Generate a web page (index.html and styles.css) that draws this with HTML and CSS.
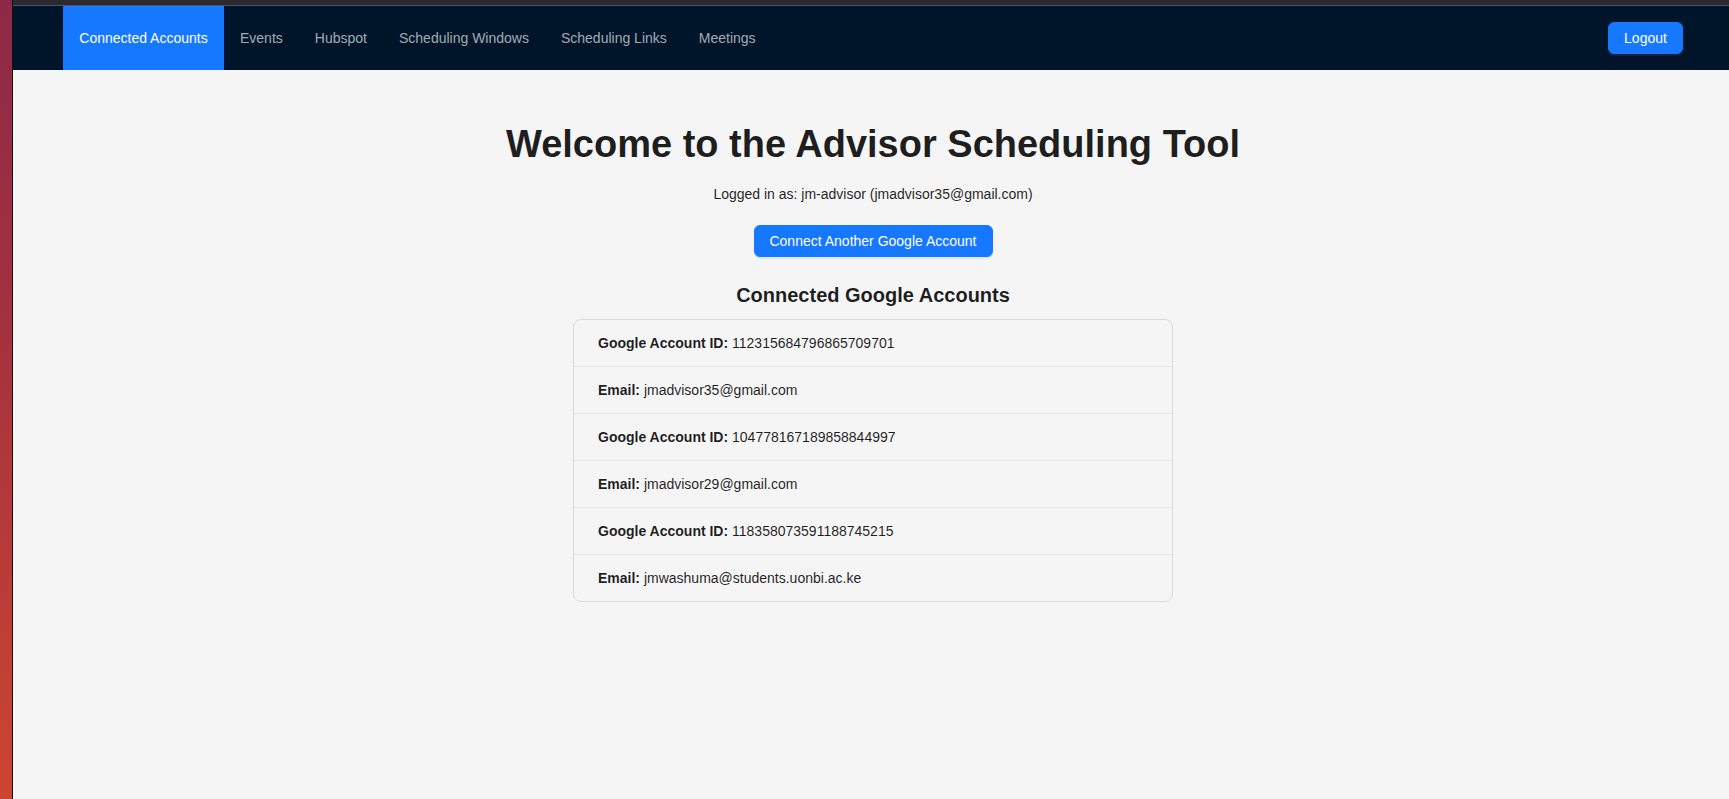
FILE: index.html
```html
<!DOCTYPE html>
<html lang="en">
<head>
<meta charset="utf-8">
<title>Advisor Scheduling Tool</title>
<link rel="stylesheet" href="styles.css">
</head>
<body>
<div class="frame">
  <div class="strip"></div>
  <div class="edge"></div>
  <div class="window">
    <div class="titlebar"></div>
    <header class="header">
      <nav class="menu">
        <a class="menu-item active">Connected Accounts</a>
        <a class="menu-item">Events</a>
        <a class="menu-item">Hubspot</a>
        <a class="menu-item">Scheduling Windows</a>
        <a class="menu-item">Scheduling Links</a>
        <a class="menu-item">Meetings</a>
      </nav>
      <button class="btn btn-logout">Logout</button>
    </header>
    <main class="content">
      <h1 class="title">Welcome to the Advisor Scheduling Tool</h1>
      <p class="subtitle">Logged in as: jm-advisor (jmadvisor35@gmail.com)</p>
      <button class="btn btn-connect">Connect Another Google Account</button>
      <h3 class="section-title">Connected Google Accounts</h3>
      <ul class="list">
        <li class="list-item"><strong>Google Account ID:</strong> 112315684796865709701</li>
        <li class="list-item"><strong>Email:</strong> jmadvisor35@gmail.com</li>
        <li class="list-item"><strong>Google Account ID:</strong> 104778167189858844997</li>
        <li class="list-item"><strong>Email:</strong> jmadvisor29@gmail.com</li>
        <li class="list-item"><strong>Google Account ID:</strong> 118358073591188745215</li>
        <li class="list-item"><strong>Email:</strong> jmwashuma@students.uonbi.ac.ke</li>
      </ul>
    </main>
  </div>
</div>
</body>
</html>
```

FILE: styles.css
```css
* { box-sizing: border-box; }

html, body {
  margin: 0;
  padding: 0;
  height: 100%;
}

body {
  font-family: "Liberation Sans", Arial, sans-serif;
  font-size: 14px;
  color: rgba(0, 0, 0, 0.88);
  background: #f5f5f5;
  overflow: hidden;
}

.frame {
  display: flex;
  height: 799px;
}

.strip {
  width: 12px;
  flex: none;
  background: linear-gradient(180deg, #8d2947 0%, #a3313f 40%, #bc3d37 75%, #cb4530 100%);
}

.edge {
  width: 1px;
  flex: none;
  background: #111111;
}

.window {
  flex: 1;
  display: flex;
  flex-direction: column;
  background: #f5f5f5;
}

.titlebar {
  height: 6px;
  background: #2b2a33;
  border-bottom: 1px solid #55535e;
  flex: none;
}

.header {
  height: 64px;
  flex: none;
  background: #001529;
  display: flex;
  align-items: center;
  justify-content: space-between;
  padding: 0 46px 0 50px;
}

.menu {
  display: flex;
  height: 64px;
}

.menu-item {
  display: block;
  padding: 0 16px;
  line-height: 64px;
  color: rgba(255, 255, 255, 0.65);
  font-size: 14px;
  text-decoration: none;
  cursor: pointer;
}

.menu-item.active {
  background: #1677ff;
  color: #ffffff;
  min-width: 161px;
  text-align: center;
}

.btn {
  font-family: inherit;
  font-size: 14px;
  height: 32px;
  padding: 0 15px;
  border: 1px solid #1677ff;
  border-radius: 6px;
  background: #1677ff;
  color: #ffffff;
  line-height: 30px;
  cursor: pointer;
  box-shadow: 0 2px 0 rgba(5, 145, 255, 0.1);
}

.btn-logout {
  width: 75px;
  padding: 0;
}

.content {
  display: flex;
  flex-direction: column;
  align-items: center;
  padding-top: 51px;
  padding-left: 4px;
}

.title {
  margin: 0;
  font-size: 38px;
  line-height: 46px;
  font-weight: 700;
  color: rgba(0, 0, 0, 0.88);
}

.subtitle {
  margin: 16px 0 20px;
  line-height: 22px;
}

.btn-connect {
  width: 239px;
  padding: 0;
}

.section-title {
  margin: 24px 0 10px;
  font-size: 20px;
  line-height: 28px;
  font-weight: 700;
}

.list {
  list-style: none;
  margin: 0;
  padding: 0;
  width: 600px;
  border: 1px solid #d9d9d9;
  border-radius: 8px;
}

.list-item {
  padding: 12px 24px;
  line-height: 22px;
  border-bottom: 1px solid rgba(5, 5, 5, 0.06);
}

.list-item:last-child {
  border-bottom: none;
}

.list-item strong {
  font-weight: 700;
}
```
